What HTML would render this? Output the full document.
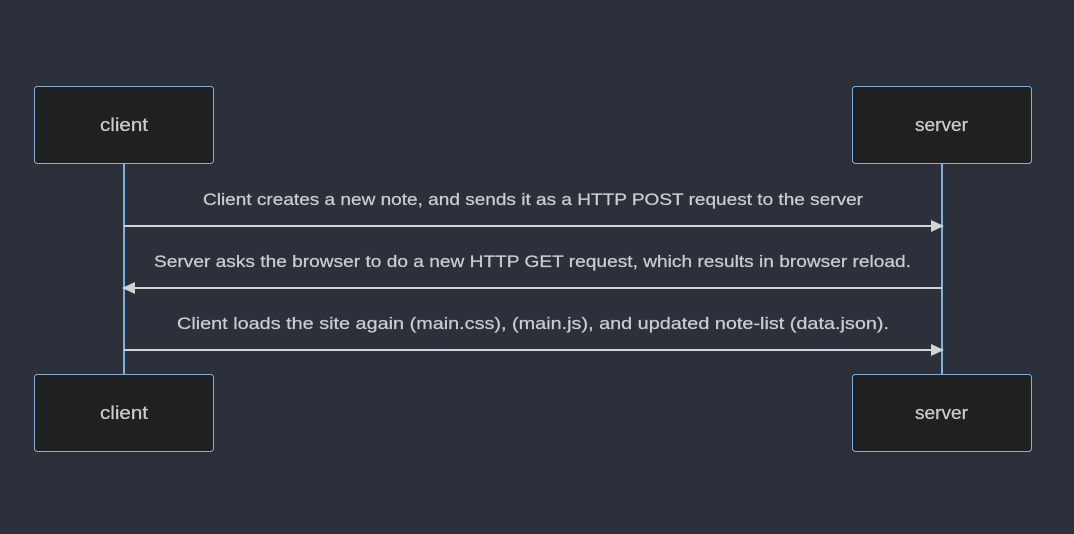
<!DOCTYPE html>
<html><head><style>
html,body{margin:0;padding:0;background:#2b303b;}
svg{display:block}
text{font-family:"Liberation Sans",sans-serif;fill:#cccccc;font-size:17px;stroke:#cccccc;stroke-width:0.25px;}
</style></head><body>
<svg width="1074" height="534" viewBox="0 0 1074 534">
<rect width="1074" height="534" fill="#2b303b"/>
<line x1="124" y1="163" x2="124" y2="374" stroke="#81b1db" stroke-width="2"/>
<line x1="942" y1="163" x2="942" y2="374" stroke="#81b1db" stroke-width="2"/>
<g fill="#1f2020" stroke="#81b1db" stroke-width="1">
<rect x="34.5" y="86.5" width="179" height="77" rx="3"/>
<rect x="852.5" y="86.5" width="179" height="77" rx="3"/>
<rect x="34.5" y="374.5" width="179" height="77" rx="3"/>
<rect x="852.5" y="374.5" width="179" height="77" rx="3"/>
</g>
<text x="100" y="131" textLength="48" lengthAdjust="spacingAndGlyphs" style="font-size:18px">client</text>
<text x="915" y="131" textLength="53" lengthAdjust="spacingAndGlyphs" style="font-size:18px">server</text>
<text x="100" y="419" textLength="48" lengthAdjust="spacingAndGlyphs" style="font-size:18px">client</text>
<text x="915" y="419" textLength="53" lengthAdjust="spacingAndGlyphs" style="font-size:18px">server</text>
<text x="203" y="205" textLength="660" lengthAdjust="spacingAndGlyphs">Client creates a new note, and sends it as a HTTP POST request to the server</text>
<text x="154" y="267" textLength="757" lengthAdjust="spacingAndGlyphs">Server asks the browser to do a new HTTP GET request, which results in browser reload.</text>
<text x="177" y="329" textLength="712" lengthAdjust="spacingAndGlyphs">Client loads the site again (main.css), (main.js), and updated note-list (data.json).</text>
<g stroke="#d3d3d3" stroke-width="2">
<line x1="124" y1="226" x2="934" y2="226"/>
<line x1="942" y1="288" x2="132" y2="288"/>
<line x1="124" y1="350" x2="934" y2="350"/>
</g>
<g fill="#d3d3d3">
<path d="M944 226 L931 220 L931 232 Z"/>
<path d="M122 288 L135 282 L135 294 Z"/>
<path d="M944 350 L931 344 L931 356 Z"/>
</g>
</svg>
</body></html>
